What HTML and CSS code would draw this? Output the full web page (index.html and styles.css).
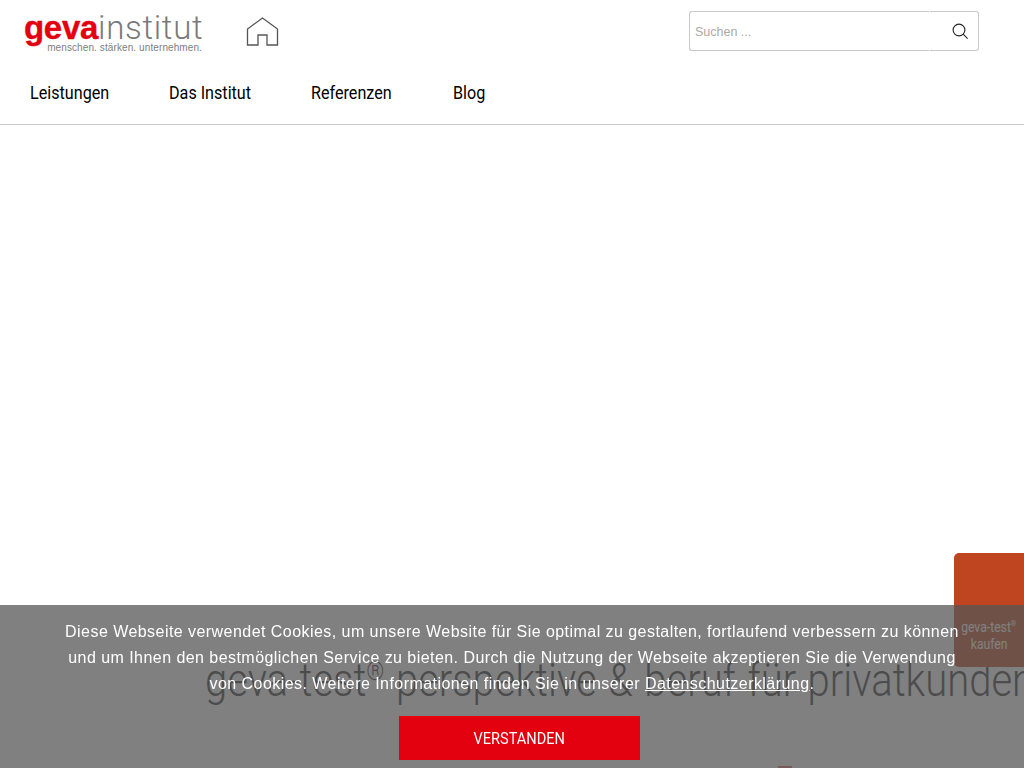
FILE: index.html
```html
<!DOCTYPE html>
<html lang="de">
<head>
    <meta charset="UTF-8">
    <title>geva-test perspektive &amp; beruf</title>
    <link rel="stylesheet" href="styles.css">
</head>
<body>
<header class="site-header">
    <div class="top-row">
        <a class="logo" href="#">
            <span class="logo-name"><span class="logo-geva">geva</span><span class="logo-institut">institut</span></span>
            <span class="logo-claim">menschen. stärken. unternehmen.</span>
        </a>
        <a class="home-link" href="#">
            <svg width="33" height="29" viewBox="0 0 33 29" fill="none" stroke="#555" stroke-width="1.3">
                <path d="M1.5 28V12L16.5 1L31.5 12V28H21V18H12V28Z"/>
            </svg>
        </a>
        <form class="search">
            <input class="search-input" type="text" placeholder="Suchen ...">
            <button class="search-button" type="button">
                <svg width="16" height="16" viewBox="0 0 16 16" fill="none" stroke="#222" stroke-width="1.1">
                    <circle cx="7" cy="7" r="5.9"/>
                    <path d="M11.2 11.2L15.6 15.6"/>
                </svg>
            </button>
        </form>
    </div>
    <nav class="main-nav">
        <a href="#">Leistungen</a>
        <a href="#">Das Institut</a>
        <a href="#">Referenzen</a>
        <a href="#">Blog</a>
    </nav>
</header>

<main class="content">
    <h1>geva-test<sup>®</sup> perspektive &amp; beruf für privatkunden</h1>
    <div class="content-mark"></div>
</main>

<a class="buy-tab" href="#"><span>geva-test<sup>®</sup></span><span>kaufen</span></a>

<div class="cookie-bar">
    <p>Diese Webseite verwendet Cookies, um unsere Website für Sie optimal zu gestalten, fortlaufend verbessern zu können und um Ihnen den bestmöglichen Service zu bieten. Durch die Nutzung der Webseite akzeptieren Sie die Verwendung von Cookies. Weitere Informationen finden Sie in unserer <a href="#">Datenschutzerklärung</a>.</p>
    <button class="cookie-button" type="button"><span>VERSTANDEN</span></button>
</div>
</body>
</html>
```

FILE: styles.css
```css
/* Global styles */
html, body {
    height: 768px;
    overflow: hidden;
}

body {
    margin: 0;
    background-color: #ffffff;
    color: #000000;
    font-family: 'Liberation Sans', Arial, sans-serif;
}

a {
    color: inherit;
    text-decoration: none;
}

/* Header */
.site-header {
    height: 124px;
    border-bottom: 1px solid #c8c8c8;
}

.top-row {
    display: flex;
    align-items: flex-start;
    padding: 11px 45px 0 24px;
}

.logo {
    display: flex;
    flex-direction: column;
    width: 180px;
}

.logo-name {
    font-size: 33px;
    line-height: 34px;
    white-space: nowrap;
}

.logo-geva {
    color: #e3000f;
    font-weight: bold;
    letter-spacing: -0.3px;
    -webkit-text-stroke: 0.4px #e3000f;
}

.logo-institut {
    color: #7a7a7a;
    font-family: 'Roboto', sans-serif;
    font-weight: 300;
    letter-spacing: 0.7px;
}

.logo-claim {
    align-self: flex-end;
    margin-top: -3px;
    margin-right: 2px;
    color: #808080;
    font-size: 10px;
    line-height: 12px;
    letter-spacing: 0.1px;
    white-space: nowrap;
}

.home-link {
    margin: 6px 0 0 42px;
}

.search {
    display: flex;
    margin-left: auto;
    width: 290px;
    height: 40px;
}

.search-input {
    flex: 1;
    min-width: 0;
    box-sizing: border-box;
    padding: 2px 5px 0;
    border: 1px solid #c8c8c8;
    border-right-color: #ffffff;
    border-radius: 3px 0 0 3px;
    font-family: 'Liberation Sans', Arial, sans-serif;
    font-size: 12.5px;
}

.search-input::placeholder {
    color: #aaaaaa;
    opacity: 1;
}

.search-button {
    display: flex;
    align-items: center;
    justify-content: center;
    width: 49px;
    padding: 0 0 0 11px;
    background-color: #ffffff;
    border: 1px solid #c8c8c8;
    border-left: none;
    border-radius: 0 3px 3px 0;
}

.main-nav {
    display: grid;
    grid-template-columns: 139px 142px 142px 60px;
    padding: 27px 0 0 30px;
    font-family: 'Roboto', sans-serif;
    font-size: 19px;
    line-height: 24px;
}

/* no condensed family installed, so squeeze the normal one */
.main-nav a {
    white-space: nowrap;
    transform: scaleX(0.85);
    transform-origin: left center;
}

/* Page content below the cookie bar */
.content {
    padding: 530px 0 0 205px;
}

.content h1 {
    margin: 0;
    color: #333333;
    font-family: 'Roboto', sans-serif;
    font-size: 46px;
    font-weight: 300;
    line-height: 50px;
    word-spacing: 2px;
    white-space: nowrap;
    transform: scaleX(0.87);
    transform-origin: left center;
}

.content sup {
    font-size: 26px;
    line-height: 0;
}

.content-mark {
    width: 14px;
    height: 4px;
    margin: 61px 0 0 573px;
    background-color: #e06060;
}

/* Side tab */
.buy-tab {
    position: fixed;
    top: 553px;
    right: 0;
    box-sizing: border-box;
    display: flex;
    flex-direction: column;
    align-items: center;
    width: 70px;
    height: 114px;
    padding-top: 66px;
    background-color: #bf4520;
    border-radius: 5px 0 0 5px;
    color: #ffffff;
    font-family: 'Roboto', sans-serif;
    font-size: 14px;
    line-height: 17px;
}

.buy-tab span {
    white-space: nowrap;
    transform: scaleX(0.87);
}

.buy-tab sup {
    font-size: 8px;
    line-height: 0;
}

/* Cookie bar */
.cookie-bar {
    position: fixed;
    left: 0;
    right: 0;
    bottom: 0;
    height: 163px;
    box-sizing: border-box;
    padding: 14px 0 0;
    background-color: rgba(85, 85, 85, 0.75);
    color: #ffffff;
    text-align: center;
}

.cookie-bar p {
    width: 900px;
    margin: 0 auto;
    font-size: 16px;
    line-height: 26px;
    letter-spacing: 0.45px;
}

.cookie-bar p a {
    text-decoration: underline;
}

.cookie-button {
    display: block;
    width: 241px;
    height: 44px;
    margin: 19px 0 0 399px;
    padding: 0;
    background-color: #e3000f;
    border: none;
    color: #ffffff;
    font-family: 'Roboto', sans-serif;
    font-size: 16px;
}

.cookie-button span {
    display: inline-block;
    transform: scaleX(0.91);
}
```
